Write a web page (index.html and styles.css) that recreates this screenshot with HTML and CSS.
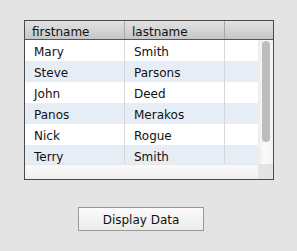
FILE: index.html
```html
<!DOCTYPE html>
<html>
<head>
<meta charset="utf-8">
<link rel="stylesheet" href="styles.css">
</head>
<body>
<div class="page">
  <div class="table">
    <div class="head">
      <div class="hcell">firstname</div>
      <div class="hcell">lastname</div>
      <div class="hcell hlast"></div>
    </div>
    <div class="mid">
      <div class="rows">
        <div class="row"><div class="cell">Mary</div><div class="cell">Smith</div><div class="cell"></div></div>
        <div class="row alt"><div class="cell">Steve</div><div class="cell">Parsons</div><div class="cell"></div></div>
        <div class="row"><div class="cell">John</div><div class="cell">Deed</div><div class="cell"></div></div>
        <div class="row alt"><div class="cell">Panos</div><div class="cell">Merakos</div><div class="cell"></div></div>
        <div class="row"><div class="cell">Nick</div><div class="cell">Rogue</div><div class="cell"></div></div>
        <div class="row alt"><div class="cell">Terry</div><div class="cell">Smith</div><div class="cell"></div></div>
      </div>
      <div class="vscroll"><div class="thumb"></div></div>
    </div>
    <div class="bottom">
      <div class="hscroll"></div>
      <div class="corner"></div>
    </div>
  </div>
  <button class="btn">Display Data</button>
</div>
</body>
</html>
```
FILE: styles.css
```css
html, body {
  margin: 0;
  padding: 0;
  background: #e4e4e4;
}
.page {
  padding: 20px 0 0 24px;
  font-family: "DejaVu Sans", sans-serif;
  font-size: 12px;
  color: #111;
}
.table {
  width: 248px;
  height: 158px;
  border: 1px solid #4a4a4a;
  background: #fff;
  display: flex;
  flex-direction: column;
  overflow: hidden;
}
.head {
  display: flex;
  height: 18px;
  flex: none;
  overflow: hidden;
  background: linear-gradient(#e2e2e2, #c6c6c6);
  border-bottom: 1px solid #555;
}
.hcell {
  width: 100px;
  box-sizing: border-box;
  border-right: 1px solid #a8a8a8;
  padding: 2px 0 0 7px;
  line-height: 19px;
  color: #111;
}
.hlast {
  border-right: none;
  flex: 1;
}
.mid {
  display: flex;
  height: 124px;
  flex: none;
  overflow: hidden;
}
.rows {
  width: 233px;
  overflow: hidden;
}
.row {
  display: flex;
  height: 21px;
  overflow: hidden;
}
.row.alt {
  background: #e7edf6;
}
.cell {
  width: 100px;
  box-sizing: border-box;
  border-right: 1px solid #d6d6d6;
  padding: 2px 0 0 9px;
  line-height: 21px;
}
.cell:last-child {
  flex: 1;
  border-right: none;
}
.vscroll {
  width: 15px;
  background: linear-gradient(90deg, #ececec, #fafafa 40%, #f4f4f4);
}
.thumb {
  margin: 1px 0 0 4px;
  width: 8px;
  height: 101px;
  border-radius: 4px;
  background: #bdbdbd;
}
.bottom {
  display: flex;
  flex: 1;
}
.hscroll {
  width: 233px;
  border-top: 1px solid #e6e6e6;
  background: linear-gradient(#fafafa, #efefef);
}
.corner {
  flex: 1;
  background: #e4e4e4;
}
.btn {
  display: block;
  margin: 27px 0 0 54px;
  width: 126px;
  height: 24px;
  border: 1px solid #999;
  border-radius: 0;
  background: linear-gradient(#fbfbfb, #ebebeb);
  font-family: "DejaVu Sans", sans-serif;
  font-size: 12px;
  color: #111;
  padding: 1px 0 0 0;
}
```
